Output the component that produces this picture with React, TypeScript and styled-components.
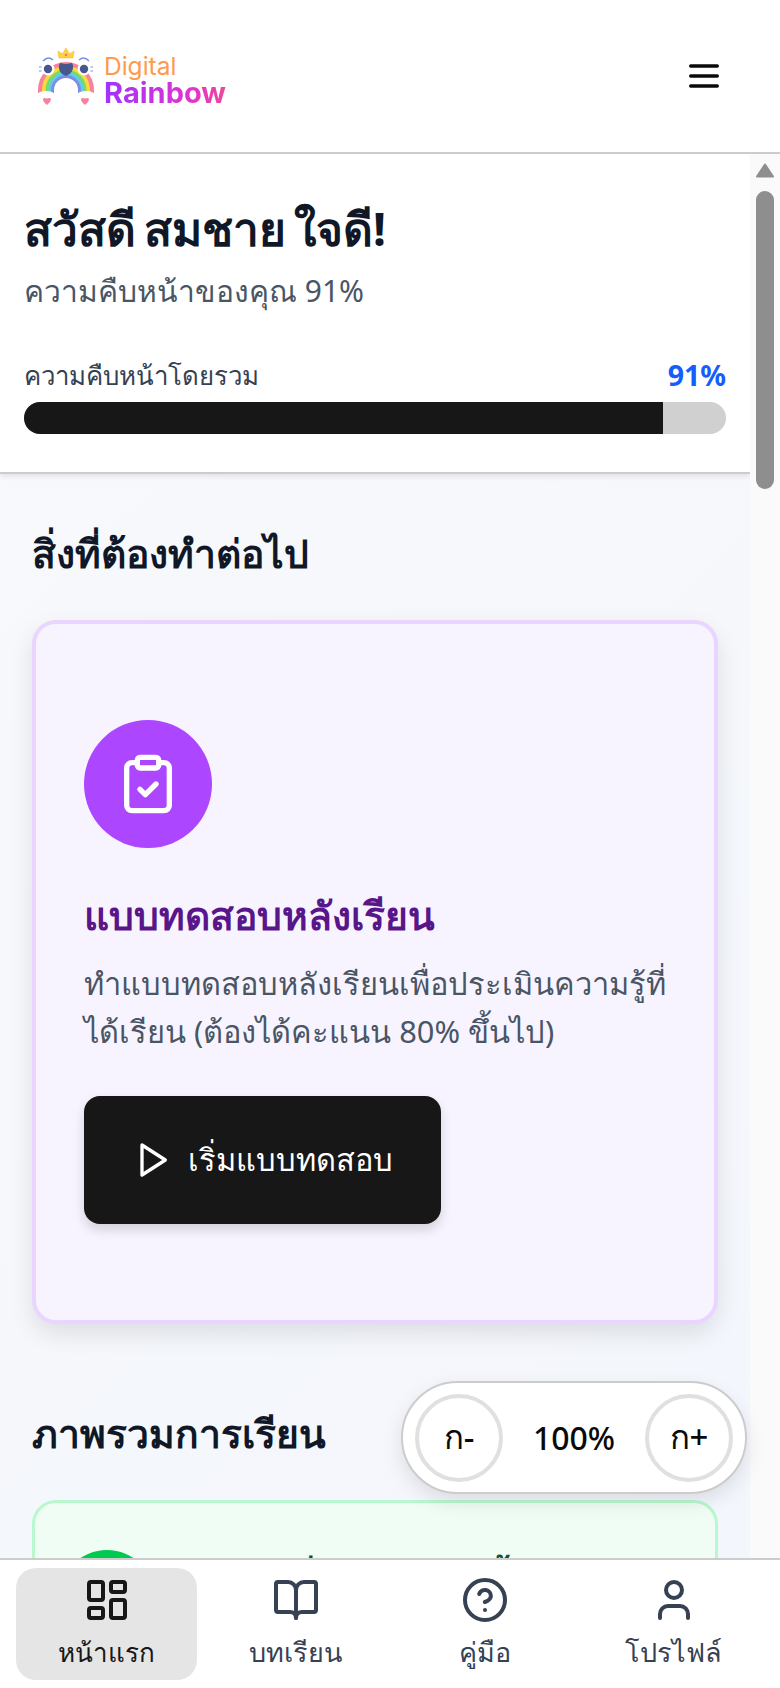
import React, { FC, ReactNode } from 'react'
import styled, { createGlobalStyle } from 'styled-components'
import { BookOpen, CircleHelp, ClipboardCheck, LayoutDashboard, User } from 'lucide-react'

const GlobalStyle = createGlobalStyle`
    html, body {
        margin: 0;
        height: 100%;
        overflow: hidden;
    }
    body {
        background: #ffffff;
        font-family: "Noto Sans", "Liberation Sans", sans-serif;
    }
    #root {
        height: 100%;
    }
`

const Layout = styled.div`
    position: relative;
    display: flex;
    flex-direction: column;
    height: 1688px;
    width: 780px;
`

const Header = styled.header`
    flex: 0 0 154px;
    box-sizing: border-box;
    display: flex;
    align-items: center;
    justify-content: space-between;
    padding: 0 56px 0 38px;
    background: #ffffff;
    border-bottom: 2px solid #cccccc;
`

const Brand = styled.div`
    display: flex;
    align-items: center;
    gap: 10px;
`

const BrandText = styled.div`
    display: flex;
    flex-direction: column;
    padding-top: 6px;
    font-family: Inter, "Noto Sans", sans-serif;
`

const BrandTop = styled.span`
    font-size: 24.5px;
    line-height: 26px;
    color: #ff9a4d;
`

const BrandBottom = styled.span`
    font-size: 29px;
    line-height: 27px;
    font-weight: 700;
    background: linear-gradient(90deg, #a033ff 0%, #e033d0 70%, #ec4899 100%);
    -webkit-background-clip: text;
    background-clip: text;
    color: transparent;
`

const Middle = styled.div`
    flex: 1;
    min-height: 0;
    display: flex;
`

const Scroller = styled.main`
    flex: 1;
    min-width: 0;
    overflow: hidden;
    background: linear-gradient(135deg, #f8f9fb, #f3f6fc);
`

const Rail = styled.div`
    flex: 0 0 30px;
    box-sizing: border-box;
    display: flex;
    flex-direction: column;
    align-items: center;
    padding-top: 9px;
    background: #fafafa;
`

const RailThumb = styled.div`
    width: 18px;
    height: 298px;
    margin-top: 13px;
    border-radius: 9px;
    background: #8e8e8e;
`

const ProgressCard = styled.section`
    box-sizing: border-box;
    height: 320px;
    padding: 44px 24px 0;
    background: #ffffff;
    border-bottom: 2px solid #cccccc;
    box-shadow: 0 2px 6px rgba(0, 0, 0, 0.1);
`

const Greeting = styled.h1`
    margin: 0;
    font-size: 46px;
    line-height: 60px;
    font-weight: 700;
    word-spacing: -4px;
    white-space: nowrap;
    color: #101828;
`

const Sub = styled.p`
    margin: 10px 0 0;
    font-size: 30px;
    line-height: 45px;
    color: #4a5565;
`

const ProgressRow = styled.div`
    display: flex;
    justify-content: space-between;
    align-items: center;
    margin-top: 42px;
    height: 40px;
`

const ProgressLabel = styled.span`
    font-size: 25.8px;
    color: #364153;
`

const ProgressValue = styled.span`
    font-size: 28.5px;
    font-weight: 700;
    color: #155dfc;
`

const Track = styled.div`
    height: 32px;
    margin-top: 7px;
    border-radius: 16px;
    overflow: hidden;
    background: #d0d0d0;
`

const Fill = styled.div`
    height: 100%;
    background: #171717;
`

const Content = styled.div`
    padding: 50px 32px 0;
`

const SectionTitle = styled.h2<{ $top?: number }>`
    margin: ${p => p.$top ?? 0}px 0 38px;
    font-size: 39px;
    line-height: 58px;
    font-weight: 700;
    color: #101828;
`

const TaskCard = styled.div`
    box-sizing: border-box;
    height: 704px;
    padding: 96px 48px;
    border: 4px solid #e9d5ff;
    border-radius: 24px;
    background: #f8f4ff;
    box-shadow: 0 10px 24px rgba(0, 0, 0, 0.1);
`

const IconCircle = styled.div<{ $bg: string; $size: number }>`
    flex: none;
    display: flex;
    align-items: center;
    justify-content: center;
    width: ${p => p.$size}px;
    height: ${p => p.$size}px;
    border-radius: 50%;
    background: ${p => p.$bg};
    color: #ffffff;
`

const TaskTitle = styled.h3`
    margin: 38px 0 15px;
    font-size: 39px;
    line-height: 58px;
    font-weight: 700;
    color: #59168b;
`

const TaskText = styled.p`
    margin: 0 0 41px;
    font-size: 30.8px;
    line-height: 48px;
    color: #4a5565;
`

const StartButton = styled.button`
    box-sizing: border-box;
    display: flex;
    align-items: center;
    gap: 16px;
    height: 128px;
    padding: 0 48px;
    border: none;
    border-radius: 16px;
    background: #171717;
    color: #ffffff;
    font-family: inherit;
    font-size: 30.8px;
    font-weight: 500;
    white-space: nowrap;
    box-shadow: 0 6px 12px rgba(0, 0, 0, 0.14);
`

const OverviewCard = styled.div`
    box-sizing: border-box;
    display: flex;
    gap: 24px;
    height: 300px;
    padding: 47px 24px;
    border: 3px solid #b9f8cf;
    border-radius: 24px;
    background: #f0fdf4;
`

const OverviewTitle = styled.div`
    padding-top: 3px;
    font-size: 33px;
    line-height: 50px;
    font-weight: 700;
    color: #0d542b;
`

const BottomNav = styled.nav`
    flex: 0 0 130px;
    box-sizing: border-box;
    display: grid;
    grid-template-columns: repeat(4, 1fr);
    gap: 8px;
    padding: 8px 16px;
    background: #ffffff;
    border-top: 2px solid #cccccc;
`

const NavItem = styled.div<{ $active?: boolean }>`
    display: flex;
    flex-direction: column;
    align-items: center;
    justify-content: center;
    gap: 8px;
    border-radius: 20px;
    font-size: ${p => (p.$active ? 26 : 27)}px;
    line-height: 40px;
    font-weight: 500;
    color: ${p => (p.$active ? '#171717' : '#364153')};
    background: ${p => (p.$active ? '#e5e5e5' : 'transparent')};
`

const FontControl = styled.div`
    position: absolute;
    left: 401px;
    top: 1381px;
    box-sizing: border-box;
    display: flex;
    align-items: center;
    justify-content: space-between;
    width: 346px;
    height: 113px;
    padding: 0 12px;
    border: 2px solid #cccccc;
    border-radius: 57px;
    background: #ffffff;
    box-shadow: 0 8px 20px rgba(0, 0, 0, 0.1);
    font-size: 32px;
    font-weight: 500;
    color: #0a0a0a;
`

const FontButton = styled.div`
    box-sizing: border-box;
    display: flex;
    align-items: center;
    justify-content: center;
    width: 88px;
    height: 88px;
    border: 4px solid #e0e0e0;
    border-radius: 50%;
    background: #ffffff;
    font-size: 33px;
`

const PlayIcon: FC = () => (
    <svg width="40" height="40" viewBox="0 0 24 24" fill="none" stroke="currentColor" strokeWidth="2" strokeLinejoin="round">
        <polygon points="6 3 20 12 6 21 6 3" />
    </svg>
)

const MenuIcon: FC = () => (
    <svg width="40" height="40" viewBox="0 0 24 24" fill="none" stroke="#0a0a0a" strokeWidth="2" strokeLinecap="round">
        <path d="M4 6h16M4 12h16M4 18h16" />
    </svg>
)

// rainbow mascot logo, drawn by hand
const Logo: FC = () => (
    <svg width="56" height="58" viewBox="0 0 56 58">
        <path d="M21 11 L20 4 L24.5 7 L28 1 L31.5 7 L36 4 L35 11 Z" fill="#ffd23f" stroke="#f5b82e" strokeWidth="0.6" />
        <circle cx="28" cy="8" r="1.2" fill="#ef6b8e" />
        <path d="M0 46 V43 A28 28 0 0 1 56 43 V46 Z" fill="#f7829c" />
        <path d="M4 46 V43 A24 24 0 0 1 52 43 V46 Z" fill="#ffd93b" />
        <path d="M7.5 46 V43 A20.5 20.5 0 0 1 48.5 43 V46 Z" fill="#72dd6e" />
        <path d="M10.5 46 V43 A17.5 17.5 0 0 1 45.5 43 V46 Z" fill="#62c9ef" />
        <path d="M13 46 V43 A15 15 0 0 1 43 43 V46 Z" fill="#7b8fe2" />
        <path d="M16 47 V43 A12 12 0 0 1 40 43 V47 Z" fill="#ffffff" />
        <circle cx="10" cy="22" r="6.5" fill="#ffffff" />
        <circle cx="46" cy="22" r="6.5" fill="#ffffff" />
        <circle cx="10" cy="22" r="4.2" fill="#46568f" />
        <circle cx="46" cy="22" r="4.2" fill="#46568f" />
        <path d="M5 14 Q10 8.5 15 13" fill="none" stroke="#7b8fe2" strokeWidth="1.5" />
        <path d="M41 13 Q46 8.5 51 14" fill="none" stroke="#7b8fe2" strokeWidth="1.5" />
        <path d="M1 20 h2.5 M1 24 h2.5 M52.5 20 h2.5 M52.5 24 h2.5" stroke="#7b8fe2" strokeWidth="1" />
        <path d="M28 29 C19 26 20 16 23 16 Q28 18 33 16 C36 16 37 26 28 29 Z" fill="#46568f" />
        <ellipse cx="8" cy="46.5" rx="7.5" ry="2.5" fill="#ffffff" />
        <ellipse cx="48" cy="46.5" rx="7.5" ry="2.5" fill="#ffffff" />
        <path d="M9 58 C3 53 4.5 49.5 9 51.5 C13.5 49.5 15 53 9 58 Z" fill="#f7829c" />
        <path d="M47 58 C41 53 42.5 49.5 47 51.5 C51.5 49.5 53 53 47 58 Z" fill="#f7829c" />
    </svg>
)

interface NavEntryProps {
    icon: ReactNode
    label: string
    active?: boolean
}

const NavEntry: FC<NavEntryProps> = ({ icon, label, active }) => (
    <NavItem $active={active}>
        {icon}
        <span>{label}</span>
    </NavItem>
)

const App: FC = () => {
    return (
        <Layout>
            <GlobalStyle />
            <Header>
                <Brand>
                    <Logo />
                    <BrandText>
                        <BrandTop>Digital</BrandTop>
                        <BrandBottom>Rainbow</BrandBottom>
                    </BrandText>
                </Brand>
                <MenuIcon />
            </Header>
            <Middle>
                <Scroller>
                    <ProgressCard>
                        <Greeting>สวัสดี สมชาย ใจดี!</Greeting>
                        <Sub>ความคืบหน้าของคุณ 91%</Sub>
                        <ProgressRow>
                            <ProgressLabel>ความคืบหน้าโดยรวม</ProgressLabel>
                            <ProgressValue>91%</ProgressValue>
                        </ProgressRow>
                        <Track>
                            <Fill style={{ width: '91%' }} />
                        </Track>
                    </ProgressCard>
                    <Content>
                        <SectionTitle>สิ่งที่ต้องทำต่อไป</SectionTitle>
                        <TaskCard>
                            <IconCircle $bg="#ad46ff" $size={128}>
                                <ClipboardCheck size={64} />
                            </IconCircle>
                            <TaskTitle>แบบทดสอบหลังเรียน</TaskTitle>
                            <TaskText>ทำแบบทดสอบหลังเรียนเพื่อประเมินความรู้ที่ได้เรียน (ต้องได้คะแนน 80% ขึ้นไป)</TaskText>
                            <StartButton>
                                <PlayIcon />
                                เริ่มแบบทดสอบ
                            </StartButton>
                        </TaskCard>
                        <SectionTitle $top={80}>ภาพรวมการเรียน</SectionTitle>
                        <OverviewCard>
                            <IconCircle $bg="#00c950" $size={96} />
                            <OverviewTitle>บทเรียนที่เรียนจบแล้วทั้งหมด</OverviewTitle>
                        </OverviewCard>
                    </Content>
                </Scroller>
                <Rail>
                    <svg width="18" height="15" viewBox="0 0 18 15">
                        <path d="M9 1.5 L17 13.5 L1 13.5 Z" fill="#8e8e8e" stroke="#8e8e8e" strokeWidth="2" strokeLinejoin="round" />
                    </svg>
                    <RailThumb />
                </Rail>
            </Middle>
            <BottomNav>
                <NavEntry active icon={<LayoutDashboard size={48} />} label="หน้าแรก" />
                <NavEntry icon={<BookOpen size={48} />} label="บทเรียน" />
                <NavEntry icon={<CircleHelp size={48} />} label="คู่มือ" />
                <NavEntry icon={<User size={48} />} label="โปรไฟล์" />
            </BottomNav>
            <FontControl>
                <FontButton>ก-</FontButton>
                <span>100%</span>
                <FontButton>ก+</FontButton>
            </FontControl>
        </Layout>
    )
}

export default App
